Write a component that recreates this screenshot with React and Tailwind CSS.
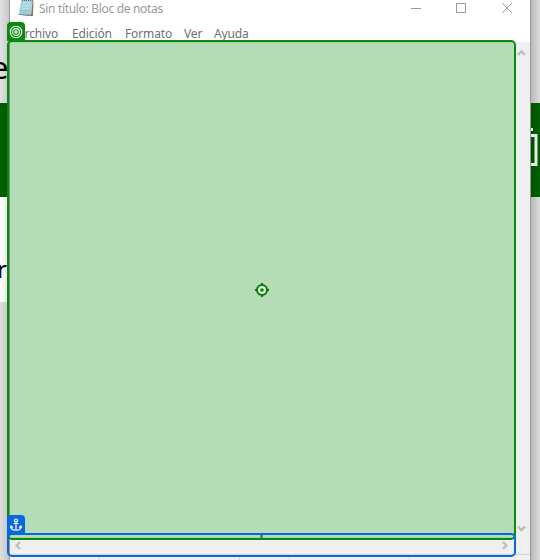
import React from 'react';

function NotepadIcon() {
  return (
    <svg className="block h-[17px] w-[17px]" viewBox="0 0 17 17">
      <path d="M3.5 0H14.5L12.5 15H0.5Z" fill="#9bcddc" />
      <path d="M4.5 2H13L11.5 10H3Z" fill="#bce3ea" />
      <path d="M14.5 1H15.5L15 16H3L13 14.8Z" fill="#8b7659" />
      <path d="M0.5 14.5L13 15" stroke="#7199ac" />
      <path d="M4 4H12.5M3.5 7H12M3 10H11.5" stroke="#8bbccd" strokeWidth=".7" />
      <path d="M4 .5H15" stroke="#626b6c" strokeDasharray="1 1" />
    </svg>
  );
}

function Chevron({ d }) {
  return (
    <svg className="block h-[9px] w-[9px]" viewBox="0 0 9 9" fill="none">
      <path d={d} stroke="#bdbdbd" strokeWidth="2.3" />
    </svg>
  );
}

function TitleBar() {
  return (
    <div className="flex h-[20px] shrink-0 text-[#999]">
      <div className="ml-[8px] w-[21px]"><NotepadIcon /></div>
      <span className="w-[360px] whitespace-nowrap text-[12px] leading-[18px] tracking-[-0.32px]">
        Sin título: Bloc de notas
      </span>
      <svg className="ml-[12px] h-[20px] w-[110px]" viewBox="0 0 110 20" fill="none" stroke="#999">
        <path d="M0 8.5H10" />
        <path d="M45.5 3.5H54.5V12.5H45.5Z" />
        <path d="M91 3L101 13M101 3L91 13" />
      </svg>
    </div>
  );
}

function MenuBar() {
  return (
    <div className="flex h-[22px] shrink-0 text-[12px] leading-[28px] tracking-[-0.12px] text-[#707070]">
      <span className="ml-[7px] w-[55px]">Archivo</span>
      <span className="w-[53px]">Edición</span>
      <span className="w-[59px]">Formato</span>
      <span className="w-[30px]">Ver</span>
      <span>Ayuda</span>
    </div>
  );
}

export default function App() {
  return (
    <div className="relative flex h-[560px] w-[540px] overflow-hidden bg-white font-['Noto_Sans','Open_Sans',sans-serif]">
      <div className="flex w-[9px] shrink-0 flex-col overflow-hidden text-black">
        <div className="h-[103px] bg-gradient-to-r from-[#e2e2e2] to-[#c8c8c8] pt-[47px] text-[31px] leading-[40px]">
          <span className="ml-[-9px] block w-[17px]">e</span>
        </div>
        <div className="h-[94px] bg-gradient-to-r from-[#006400] to-[#005400]" />
        <div className="h-[105px] bg-gradient-to-r from-white to-[#e9e9e9] pt-[55px] text-[24px] leading-[34px]">
          <span className="ml-[-3px] block">r</span>
        </div>
        <div className="flex-1 bg-gradient-to-r from-[#dedede] to-[#c5c5c5]" />
      </div>

      <div className="flex w-[522px] shrink-0 flex-col border-x border-[#999] bg-white">
        <TitleBar />
        <MenuBar />
        <div className="flex h-[495px] shrink-0">
          <div className="w-[505px] border-t border-[#eee]" />
          <div className="flex flex-1 flex-col items-center justify-between bg-[#efefef] pb-[4px] pt-[7px] pr-[2px]">
            <Chevron d="M1 6L4.5 2.5L8 6" />
            <Chevron d="M1 2.5L4.5 6L8 2.5" />
          </div>
        </div>
        <div className="flex h-[17px] shrink-0 items-center justify-between bg-[#efefef] pl-[4px] pr-[21px]">
          <Chevron d="M6 1L2.5 4.5L6 8" />
          <Chevron d="M3 1L6.5 4.5L3 8" />
        </div>
        <div className="flex flex-1 border-t border-[#d4d4d4] bg-[#f1f1f1]">
          <div className="w-[90px] border-r border-[#d4d4d4]" />
          <div className="w-[140px] border-r border-[#d4d4d4]" />
          <div className="w-[50px] border-r border-[#d4d4d4]" />
          <div className="w-[120px] border-r border-[#d4d4d4]" />
        </div>
      </div>

      <div className="flex w-[9px] shrink-0 flex-col">
        <div className="h-[103px] bg-gradient-to-r from-[#b9b9b9] to-[#dedede]" />
        <div className="h-[94px] bg-gradient-to-r from-[#005000] to-[#006400]">
          <svg className="block h-full w-[9px]" viewBox="0 0 9 94" fill="none" stroke="#e6ebe6" strokeWidth="3">
            <path d="M0 26.5H2" />
            <path d="M0 32.5H5V61.5H0" />
          </svg>
        </div>
        <div className="flex-1 bg-gradient-to-r from-[#b9b9b9] to-[#dedede]" />
      </div>

      <div className="absolute left-[7px] top-[40px] flex h-[500px] w-[509px] items-center justify-center rounded-[5px] border-2 border-[#078b0d] bg-[#078b0d]/30">
        <svg className="h-[14px] w-[14px]" viewBox="0 0 14 14" fill="none">
          <circle cx="7" cy="7" r="5" fill="#d9efd9" stroke="#087a0d" strokeWidth="2" />
          <path d="M7 0V2M7 12V14M0 7H2M12 7H14" stroke="#087a0d" strokeWidth="2" />
          <circle cx="7" cy="7" r="1.7" fill="#087a0d" />
        </svg>
      </div>
      <div className="absolute left-[7px] top-[22px] flex h-[19px] w-[18px] items-center justify-center rounded-t-[4px] bg-[#078b0d]">
        <svg className="h-[14px] w-[14px]" viewBox="0 0 14 14" fill="none" stroke="white" strokeWidth="1.1">
          <circle cx="7" cy="7" r="5.7" />
          <circle cx="7" cy="7" r="3.4" />
          <circle cx="7" cy="7" r="1.1" />
        </svg>
      </div>

      <div className="absolute left-[7px] top-[533px] flex h-[24px] w-[509px] justify-center rounded-[5px] border-2 border-[#0867df]">
        <div className="h-[3px] w-[3px] border-x border-[#559eaa] bg-[#176b9a]" />
      </div>
      <div className="absolute left-[7px] top-[515px] flex h-[19px] w-[18px] items-center justify-center rounded-t-[4px] bg-[#0867df]">
        <svg className="h-[14px] w-[12px]" viewBox="0 0 12 14" fill="none" stroke="white" strokeWidth="1.2">
          <circle cx="6" cy="2.5" r="1.5" />
          <path d="M6 4V12M3.5 5.5H8.5M1 8.5C1 13.5 11 13.5 11 8.5M.5 10L1 8L3 9.5M11.5 10L11 8L9 9.5" />
        </svg>
      </div>
    </div>
  );
}
